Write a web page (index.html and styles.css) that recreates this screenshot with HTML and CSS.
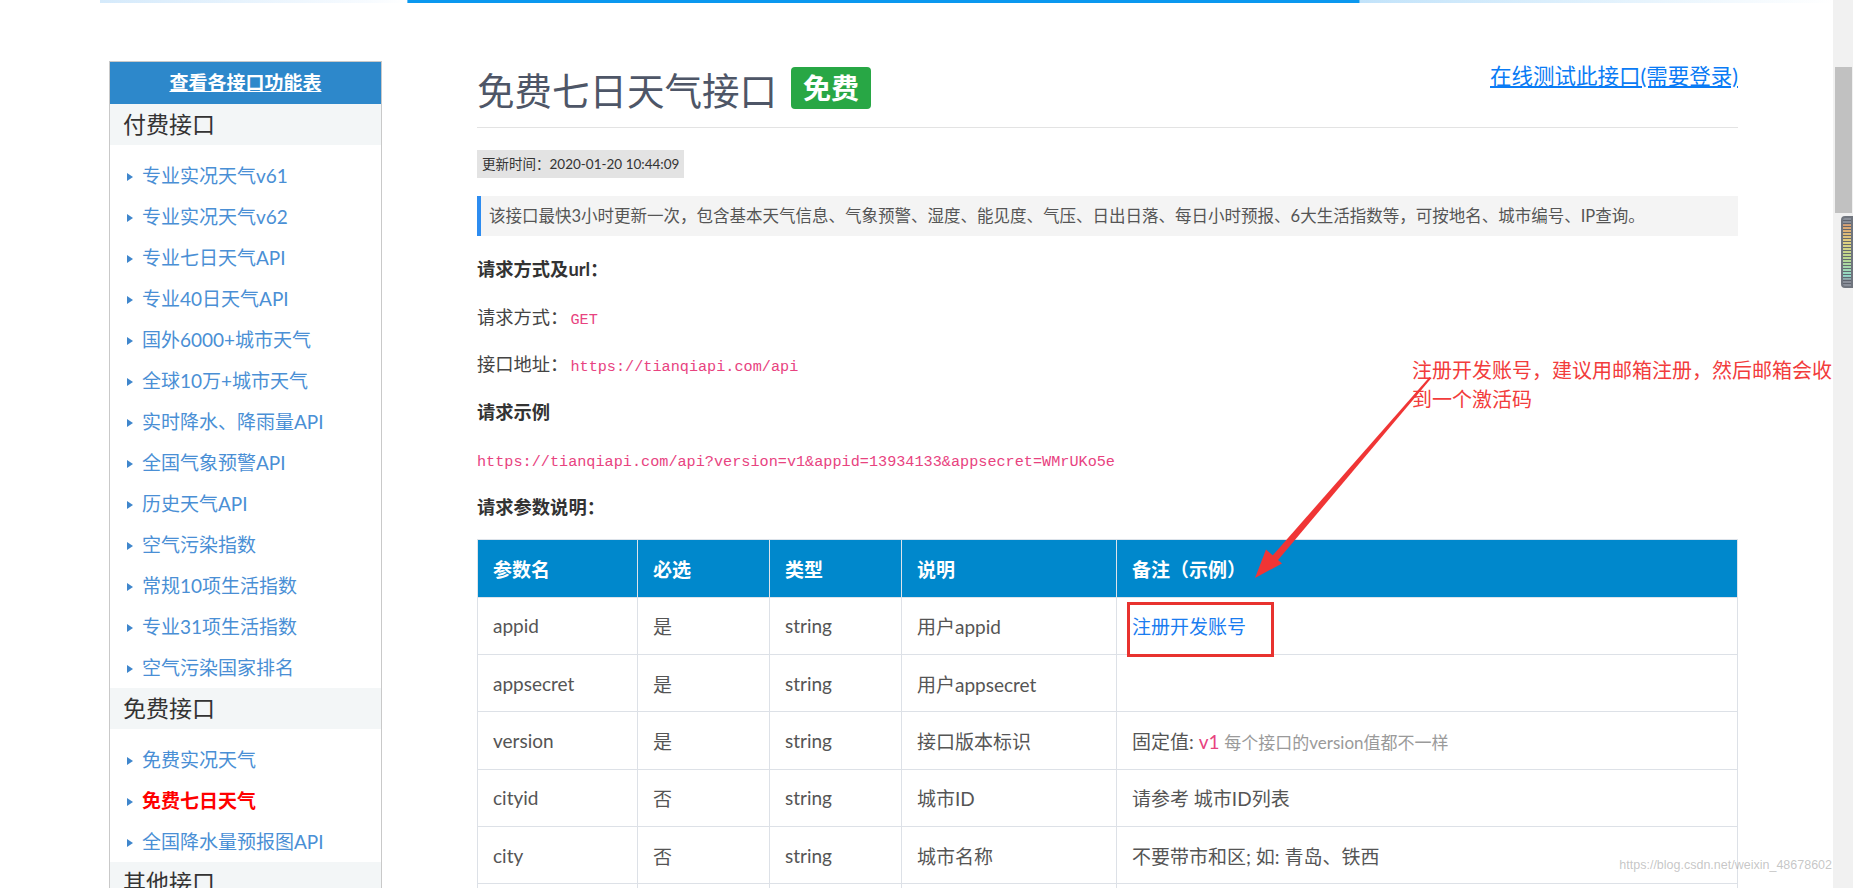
FILE: index.html
```html
<!DOCTYPE html>
<html lang="zh-CN">
<head>
<meta charset="utf-8">
<title>免费七日天气接口</title>
<link rel="stylesheet" href="styles.css">
</head>
<body>
<div class="window">
  <div class="page">
    <div class="progress"></div>
    <div class="layout">
      <aside class="sidebar">
        <div class="side-head"><a href="#">查看各接口功能表</a></div>
        <div class="side-sec">付费接口</div>
        <ul class="side-list">
          <li><a href="#">专业实况天气v61</a></li>
          <li><a href="#">专业实况天气v62</a></li>
          <li><a href="#">专业七日天气API</a></li>
          <li><a href="#">专业40日天气API</a></li>
          <li><a href="#">国外6000+城市天气</a></li>
          <li><a href="#">全球10万+城市天气</a></li>
          <li><a href="#">实时降水、降雨量API</a></li>
          <li><a href="#">全国气象预警API</a></li>
          <li><a href="#">历史天气API</a></li>
          <li><a href="#">空气污染指数</a></li>
          <li><a href="#">常规10项生活指数</a></li>
          <li><a href="#">专业31项生活指数</a></li>
          <li><a href="#">空气污染国家排名</a></li>
        </ul>
        <div class="side-sec">免费接口</div>
        <ul class="side-list">
          <li><a href="#">免费实况天气</a></li>
          <li class="active"><a href="#">免费七日天气</a></li>
          <li><a href="#">全国降水量预报图API</a></li>
        </ul>
        <div class="side-sec">其他接口</div>
        <ul class="side-list">
          <li><a href="#">城市ID列表</a></li>
        </ul>
      </aside>

      <main class="content">
        <div class="head">
          <h1 class="title">免费七日天气接口 <span class="badge">免费</span></h1>
          <a class="test-link" href="#">在线测试此接口(需要登录)</a>
        </div>
        <div class="updated">更新时间：2020-01-20 10:44:09</div>
        <div class="desc">该接口最快3小时更新一次，包含基本天气信息、气象预警、湿度、能见度、气压、日出日落、每日小时预报、6大生活指数等，可按地名、城市编号、IP查询。</div>
        <p class="line strong">请求方式及url：</p>
        <p class="line">请求方式：<code>GET</code></p>
        <p class="line">接口地址：<code>https://tianqiapi.com/api</code></p>
        <p class="line strong">请求示例</p>
        <p class="line"><code class="bare">https://tianqiapi.com/api?version=v1&amp;appid=13934133&amp;appsecret=WMrUKo5e</code></p>
        <p class="line strong">请求参数说明：</p>

        <table class="params">
          <colgroup>
            <col class="c1"><col class="c2"><col class="c3"><col class="c4"><col>
          </colgroup>
          <thead>
            <tr><th>参数名</th><th>必选</th><th>类型</th><th>说明</th><th>备注（示例）</th></tr>
          </thead>
          <tbody>
            <tr><td>appid</td><td>是</td><td>string</td><td>用户appid</td><td><a class="reg mark" href="#">注册开发账号</a></td></tr>
            <tr><td>appsecret</td><td>是</td><td>string</td><td>用户appsecret</td><td></td></tr>
            <tr><td>version</td><td>是</td><td>string</td><td>接口版本标识</td><td>固定值: <span class="pink">v1</span> <span class="muted">每个接口的version值都不一样</span></td></tr>
            <tr><td>cityid</td><td>否</td><td>string</td><td>城市ID</td><td>请参考 城市ID列表</td></tr>
            <tr><td>city</td><td>否</td><td>string</td><td>城市名称</td><td>不要带市和区; 如: 青岛、铁西</td></tr>
            <tr><td>ip</td><td>否</td><td>string</td><td>IP地址</td><td>查询IP所在城市天气</td></tr>
          </tbody>
        </table>
      </main>
    </div>

    <div class="note">注册开发账号，建议用邮箱注册，然后邮箱会收到一个激活码</div>
    <svg class="arrow" width="1833" height="888" viewBox="0 0 1833 888" xmlns="http://www.w3.org/2000/svg">
      <polygon points="1429.5,377 1431,378.5 1275.5,563 1270,558.5" fill="#f03535"/>
      <polygon points="1255,578 1282,563.5 1266,549.5" fill="#f03535"/>
    </svg>
    <div class="watermark">https://blog.csdn.net/weixin_48678602</div>
  </div>

  <div class="scrollbar">
    <div class="thumb"></div>
    <div class="widget"></div>
  </div>
</div>
</body>
</html>
```

FILE: styles.css
```css
* { box-sizing: border-box; }

html, body {
  margin: 0;
  padding: 0;
  background: #fff;
  font-family: Lato, "Noto Sans CJK SC", sans-serif;
  color: #444;
}

a { text-decoration: none; }

.window {
  display: flex;
  width: 1853px;
  height: 888px;
  overflow: hidden;
}

.page {
  position: relative;
  flex: 1;
  height: 888px;
  overflow: hidden;
}

.progress {
  height: 3px;
  margin-left: 100px;
  width: 1733px;
  background: linear-gradient(to right,
    #d5eafb 0%, #f7fbff 15.5%, #ffffff 17.7%,
    #0b98ef 17.77%, #0b98ef 72.65%,
    #c2e3fa 72.7%, #ffffff 100%);
}

.layout {
  display: flex;
  align-items: flex-start;
  padding-left: 109px;
  margin-top: 58px;
}

/* sidebar */
.sidebar {
  width: 273px;
  flex: none;
  border: 1px solid #c9c9c9;
  border-bottom: none;
}

.side-head {
  height: 42px;
  line-height: 42px;
  text-align: center;
  background: #2d88cb;
}
.side-head a {
  color: #fff;
  font-weight: bold;
  font-size: 19px;
  text-decoration: underline;
}

.side-sec {
  height: 41px;
  line-height: 41px;
  padding-left: 13px;
  font-size: 23px;
  color: #333;
  background: #f3f6f7;
}

.side-list {
  list-style: none;
  margin: 0;
  padding: 10px 0 0 17px;
}
.side-list li {
  height: 41px;
  line-height: 41px;
  font-size: 19px;
  display: flex;
  align-items: center;
}
.side-list li::before {
  content: "";
  width: 0;
  height: 0;
  border-left: 6px solid #3f86cc;
  border-top: 4px solid transparent;
  border-bottom: 4px solid transparent;
  margin-right: 9px;
  margin-top: 2px;
}
.side-list a { color: #4a8fd5; }
.side-list li.active a { color: #ff0000; font-weight: bold; }

/* content */
.content {
  margin-left: 95px;
  width: 1261px;
  flex: none;
}

.head {
  display: flex;
  justify-content: space-between;
  align-items: flex-start;
  padding-bottom: 18px;
  border-bottom: 1px solid #e3e3e3;
}

.title {
  margin: 6px 0 0;
  height: 42px;
  display: flex;
  align-items: center;
  gap: 14px;
  font-size: 37.5px;
  font-weight: normal;
  color: #4e5667;
  white-space: nowrap;
}
.badge {
  display: inline-block;
  height: 42px;
  line-height: 42px;
  padding: 0 12px;
  background: #28a745;
  color: #fff;
  border-radius: 4px;
  font-size: 28px;
  font-weight: bold;
}

.test-link {
  font-size: 21.5px;
  line-height: 30px;
  color: #0a7bf5;
  text-decoration: underline;
}

.updated {
  display: inline-block;
  margin-top: 22px;
  height: 28px;
  line-height: 28px;
  padding: 0 5px;
  background: #e3e3e3;
  font-size: 13.5px;
  color: #333;
}

.desc {
  margin-top: 18px;
  height: 40px;
  line-height: 40px;
  padding-left: 8px;
  border-left: 4px solid #2d8cf0;
  background: #f4f4f4;
  font-size: 16.5px;
  color: #555;
  white-space: nowrap;
}

.line {
  margin: 21.5px 0 0;
  height: 26px;
  line-height: 26px;
  font-size: 18.3px;
  color: #444;
}
.line:first-of-type { margin-top: 20px; }
.line.strong { font-weight: bold; color: #333; }

code {
  font-family: "Liberation Mono", monospace;
  font-size: 15.2px;
  color: #e8437f;
  padding: 0 2px;
}
code.bare { padding: 0; }

/* table */
.params {
  margin-top: 19px;
  width: 1261px;
  border-collapse: collapse;
  table-layout: fixed;
  font-size: 19px;
}
.params .c1 { width: 160px; }
.params .c2 { width: 132px; }
.params .c3 { width: 132px; }
.params .c4 { width: 215px; }

.params th {
  height: 58px;
  padding: 0 15px;
  background: #0088cc;
  color: #fff;
  font-weight: bold;
  text-align: left;
  border: 1px solid #dde3ea;
}
.params td {
  height: 57.4px;
  padding: 0 15px;
  color: #555;
  border: 1px solid #dde1e7;
  white-space: nowrap;
}

.reg { color: #1a7cf0; }
.mark { position: relative; }
.mark::after {
  content: "";
  position: absolute;
  left: -5px;
  right: -28px;
  top: 50%;
  height: 49px;
  margin-top: -24.5px;
  border: 3px solid #e8322f;
}
.pink { color: #e8437f; }
.muted { color: #9a9a9a; font-size: 17px; }

/* overlays */
.note {
  position: absolute;
  left: 1412px;
  top: 356px;
  width: 425px;
  font-size: 20px;
  line-height: 29px;
  color: #f23c3c;
}

.arrow {
  position: absolute;
  left: 0;
  top: 0;
  pointer-events: none;
}

.watermark {
  position: absolute;
  right: 1px;
  top: 858px;
  font-family: "Liberation Sans", sans-serif;
  font-size: 12.5px;
  color: rgba(150, 150, 150, 0.55);
}

/* scrollbar */
.scrollbar {
  width: 20px;
  flex: none;
  height: 888px;
  background: #f1f1f1;
}
.thumb {
  margin: 67px 1px 0 2px;
  height: 146px;
  background: #c1c1c1;
}
.widget {
  margin: 3px 0 0 8px;
  height: 72px;
  border-radius: 4px 0 0 4px;
  background:
    repeating-linear-gradient(to bottom, transparent 0 2px, rgba(90,95,105,0.9) 2px 3px),
    linear-gradient(to bottom, #8a8f99 0 8%, #d9a070 10%, #e0d080 35%, #b8d890 60%, #90d8c8 85%, #8a8f99 92%);
  border: 2px solid #70757e;
}
```
